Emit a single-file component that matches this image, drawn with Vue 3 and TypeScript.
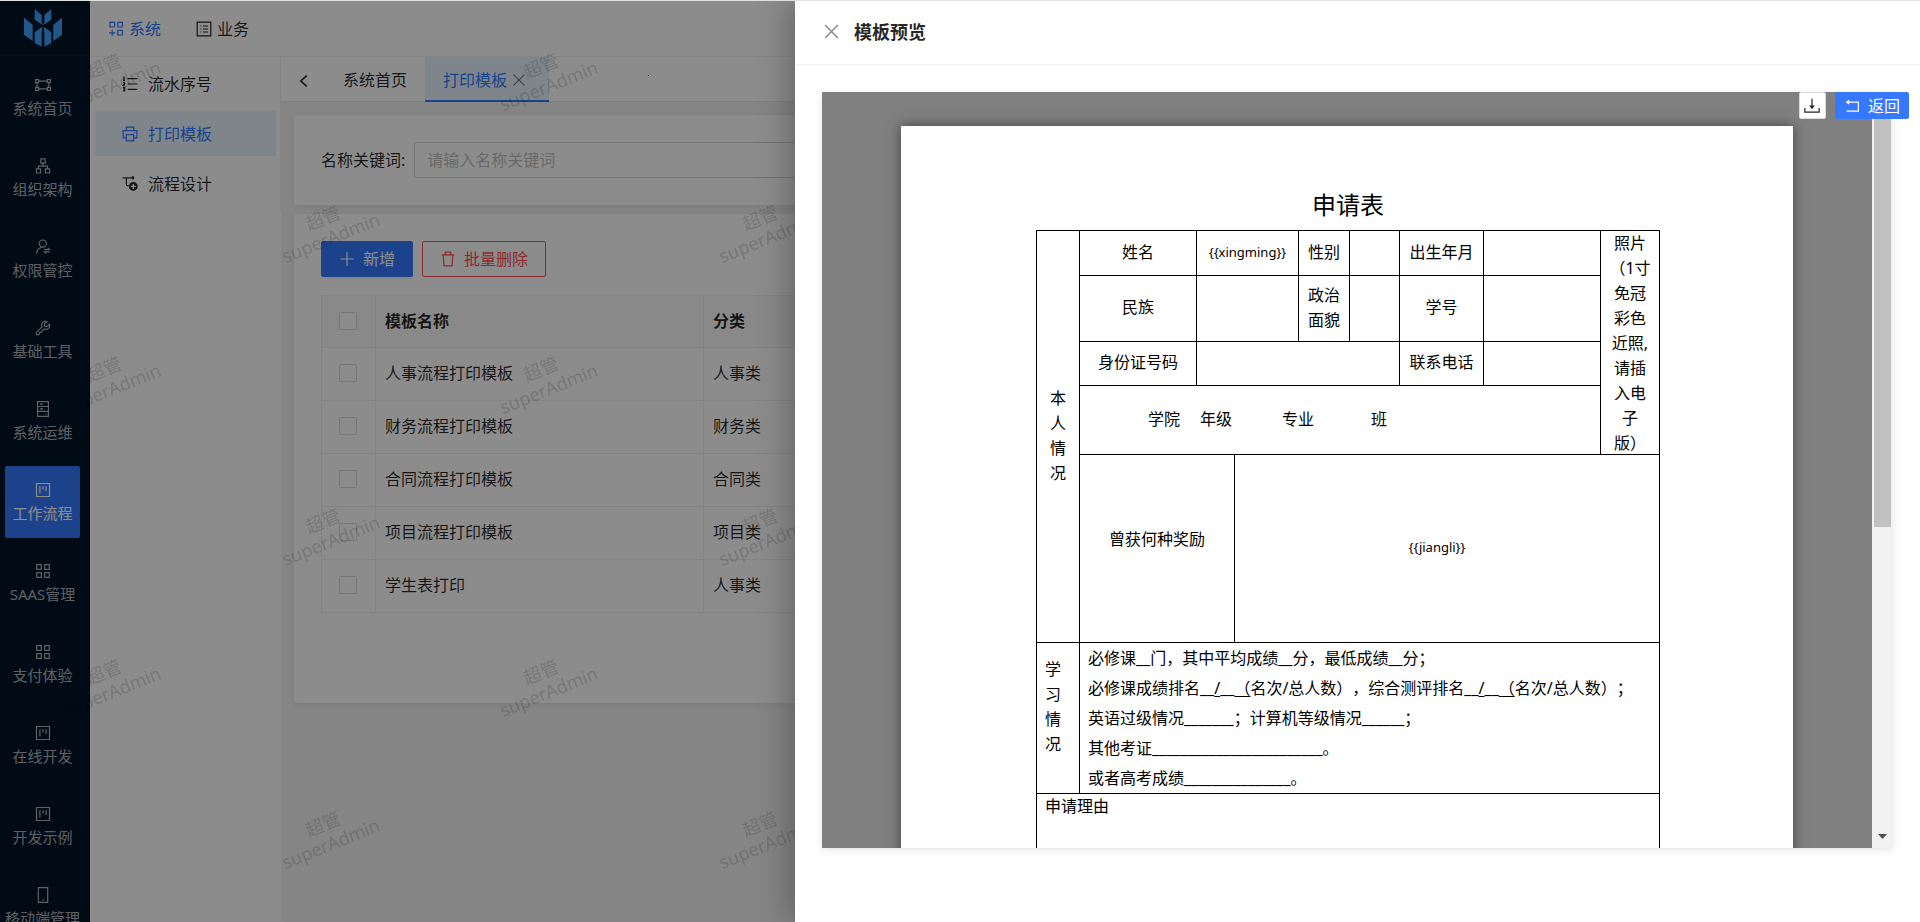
<script setup lang="ts">
import { ref } from 'vue'

interface Icon {
  line?: string
  fill?: string
}

const icons: Record<string, Icon> = {
  gateway: { line: 'M.6 2.6h3v3h-3zM12.4 2.6h3v3h-3zM.6 10.4h3v3h-3zM12.4 10.4h3v3h-3zM3.6 4.1h8.8M3.6 11.9h8.8M2.1 5.6v4.8M13.9 5.6v4.8' },
  apartment: { line: 'M5.8.8h4.4v4.4H5.8zM1.4 10.8h4.2V15H1.4zM10.4 10.8h4.2V15h-4.2zM8 5.2v3M3.5 10.8V8.2h9v2.6' },
  user: { line: 'M11.4 4.6a3.6 3.6 0 1 1-7.2 0 3.6 3.6 0 0 1 7.2 0zM1.6 14.8c.1-3.4 2-5.6 4.7-6.3M9.2 10.6h5.2l-1.6-1.6M14.6 12.8H9.4l1.6 1.6' },
  tool: { line: 'M14.4 4.1l-2.6 2.5-2.1-.4-.4-2.1L11.900 1.500C10 .8 7.900 1.500 7 3.300c-.6 1.200-.5 2.500 0 3.600L1.400 12.400v2.200h2.200l1-1v-1.200h1.200L9.100 9c1.200.5 2.600.5 3.800-.3 1.600-1 2.200-2.900 1.500-4.600z' },
  server: { line: 'M2.600.7h10.800v14.600H2.600zM2.600 5.500h10.800M2.600 10.300h10.800M5 3.100h3M5 7.900h3M10.500 12.800h1' },
  project: { line: 'M1.500 1.500h13v13h-13zM4.900 4.200v7.400M8 4.200v3.200M11.100 4.200v4.800' },
  appstore: { line: 'M1.700 1.700h4.600v4.600H1.700zM9.700 1.700h4.600v4.600H9.700zM1.700 9.700h4.600v4.600H1.700zM9.700 9.700h4.600v4.600H9.700z' },
  mobile: { line: 'M3.300.7h9.400v14.600H3.300zM7 13h2' },
  appadd: { line: 'M2 1.400h4.600V6H2zM9.800 1.400h4.600V6H9.800zM9.800 9.400h4.600V14H9.800zM4.200 8.800v6M1 11.800h6.200' },
  profile: { line: 'M1.200 1.200h13.600v13.600H1.200zM7 5h5M7 8h5M7 11h5M4.400 5h1M4.400 8h1M4.400 11h1' },
  ordered: { line: 'M5.600 2.600h9.800M5.600 8h9.800M5.600 13.400h9.800M1.200 1.200H2v3M1 4.300h2M1 6.700h1.600v1.200L1 9.300h1.800M1 11.700h1.700v3.100H1M1.400 13.200h1.200' },
  printer: { line: 'M4.300 4.600V1.200h7.400v3.400M4.200 11.800H1.100V4.700h13.800v7.100h-3.100M4.300 8.600h7.400v6.200H4.300zM11.800 6.700h1' },
  node: {
    line: 'M.6 1.800h11M4.400 1.800v6.800c0 .6.300 1 1 1h1.400',
    fill: 'M10 .2a1.700 1.700 0 1 1 0 3.200zM11.300 6a4.400 4.400 0 1 0 0 8.800 4.400 4.400 0 0 0 0-8.800zm.7 1.900v1.800h1.800v1.400H12v1.800h-1.400v-1.800H8.800V9.700h1.800V7.900z',
  },
  left: { line: 'M10.800 2.600L4.800 8l6 5.400' },
  close: { line: 'M2.600 2.600l10.800 10.800M13.400 2.600L2.600 13.400' },
  plus: { line: 'M8 1v14M1.400 8h13.200' },
  trash: { line: 'M1.600 3.800h12.800M5.200 3.800V1.200h5.600v2.600M3.200 3.800l.7 11h8.200l.7-11' },
  download: { line: 'M8 .8v9M.9 10v4.200h14.200V10', fill: 'M5.200 7.600h5.600L8 11.200z' },
  rollback: { line: 'M4.600 4.200h9.800v9H2.600', fill: 'M5.200 1.600v5.200L1.600 4.200z' },
}

const modules = [
  { label: '系统首页', icon: 'gateway' },
  { label: '组织架构', icon: 'apartment' },
  { label: '权限管控', icon: 'user' },
  { label: '基础工具', icon: 'tool' },
  { label: '系统运维', icon: 'server' },
  { label: '工作流程', icon: 'project' },
  { label: 'SAAS管理', icon: 'appstore' },
  { label: '支付体验', icon: 'appstore' },
  { label: '在线开发', icon: 'project' },
  { label: '开发示例', icon: 'project' },
  { label: '移动端管理', icon: 'mobile' },
]

const topMenu = [
  { label: '系统', icon: 'appadd' },
  { label: '业务', icon: 'profile' },
]

const subMenu = [
  { label: '流水序号', icon: 'ordered' },
  { label: '打印模板', icon: 'printer' },
  { label: '流程设计', icon: 'node' },
]

const templates = [
  { name: '人事流程打印模板', type: '人事类' },
  { name: '财务流程打印模板', type: '财务类' },
  { name: '合同流程打印模板', type: '合同类' },
  { name: '项目流程打印模板', type: '项目类' },
  { name: '学生表打印', type: '人事类' },
]

const activeModule = ref('工作流程')
const activeTop = ref('系统')
const activeSub = ref('打印模板')
const keyword = ref('')

const nameField = '{{xingming}}'
const awardField = '{{jiangli}}'
const columnWidths = [43, 117, 38, 64, 51, 50, 84, 117, 59]
</script>

<template>
  <div class="app">
    <div class="shell">
      <aside class="side">
        <div class="logo">
          <svg width="38" height="38" viewBox="0 0 114 114" aria-hidden="true">
            <path d="M0 26l26 21v49L0 78zM114 26L88 47v49l26-18zM32 0l21 18v22l4 9-25-17zM82 0L61 18v22l-4 9 25-17zM55 53L32 70v32l21 11V72zM59 53l23 17v32l-21 11V72z" />
          </svg>
        </div>
        <nav class="modules">
          <button
            v-for="m in modules"
            :key="m.label"
            type="button"
            class="module"
            :class="{ on: m.label === activeModule }"
            @click="activeModule = m.label"
          >
            <svg class="ico" viewBox="0 0 16 16"><path :d="icons[m.icon].line" /></svg>
            <span>{{ m.label }}</span>
          </button>
        </nav>
      </aside>

      <div class="right">
        <header class="top">
          <a
            v-for="t in topMenu"
            :key="t.label"
            href="#"
            class="topitem"
            :class="{ on: t.label === activeTop }"
            @click.prevent="activeTop = t.label"
          >
            <svg class="ico" viewBox="0 0 16 16"><path :d="icons[t.icon].line" /></svg>
            <span>{{ t.label }}</span>
          </a>
        </header>

        <div class="work">
          <nav class="sub">
            <div class="sublist">
              <a
                v-for="s in subMenu"
                :key="s.label"
                href="#"
                class="subitem"
                :class="{ on: s.label === activeSub }"
                @click.prevent="activeSub = s.label"
              >
                <svg class="ico" viewBox="0 0 16 16">
                  <path :d="icons[s.icon].line" />
                  <path v-if="icons[s.icon].fill" class="solid" :d="icons[s.icon].fill" />
                </svg>
                <span>{{ s.label }}</span>
              </a>
            </div>
          </nav>

          <main class="main">
            <div class="tabs">
              <button type="button" class="prev" aria-label="向左">
                <svg class="ico bold" viewBox="0 0 16 16"><path :d="icons.left.line" /></svg>
              </button>
              <a href="#" class="tab">系统首页</a>
              <a href="#" class="tab on">
                <span>打印模板</span>
                <svg class="ico x" viewBox="0 0 16 16"><path :d="icons.close.line" /></svg>
              </a>
              <i class="dot"></i>
            </div>

            <section class="card search">
              <label for="kw">名称关键词:</label>
              <input id="kw" v-model="keyword" type="text" placeholder="请输入名称关键词" />
            </section>

            <section class="card list">
              <div class="actions">
                <button type="button" class="btn primary">
                  <svg class="ico" viewBox="0 0 16 16"><path :d="icons.plus.line" /></svg>
                  <span>新增</span>
                </button>
                <button type="button" class="btn danger">
                  <svg class="ico" viewBox="0 0 16 16"><path :d="icons.trash.line" /></svg>
                  <span>批量删除</span>
                </button>
              </div>
              <table class="grid">
                <thead>
                  <tr>
                    <th class="pick"><input type="checkbox" aria-label="全选" /></th>
                    <th class="name">模板名称</th>
                    <th>分类</th>
                  </tr>
                </thead>
                <tbody>
                  <tr v-for="row in templates" :key="row.name">
                    <td class="pick"><input type="checkbox" :aria-label="row.name" /></td>
                    <td>{{ row.name }}</td>
                    <td>{{ row.type }}</td>
                  </tr>
                </tbody>
              </table>
            </section>
          </main>
        </div>
      </div>

      <svg class="watermark" width="100%" height="100%" aria-hidden="true">
        <defs>
          <pattern id="wm" width="437" height="303" patternUnits="userSpaceOnUse">
            <g transform="translate(327 227) rotate(-22)">
              <text y="-4">超管</text>
              <text y="17">superAdmin</text>
            </g>
            <g transform="translate(108 75) rotate(-22)">
              <text y="-4">超管</text>
              <text y="17">superAdmin</text>
            </g>
          </pattern>
        </defs>
        <rect width="100%" height="100%" fill="url(#wm)" />
      </svg>
      <div class="mask"></div>
    </div>

    <section class="drawer" role="dialog" aria-labelledby="dt">
      <header class="dhead">
        <button type="button" class="dclose" aria-label="关闭">
          <svg class="ico" viewBox="0 0 16 16"><path :d="icons.close.line" /></svg>
        </button>
        <h2 id="dt">模板预览</h2>
      </header>
      <div class="dbody">
        <div class="viewer">
          <div class="canvas">
            <article class="page">
              <h1>申请表</h1>
              <table class="form">
                <colgroup>
                  <col v-for="(w, i) in columnWidths" :key="i" :style="{ width: w + 'px' }" />
                </colgroup>
                <tbody>
                  <tr class="r1">
                    <td rowspan="5">本<br />人<br />情<br />况</td>
                    <td>姓名</td>
                    <td colspan="2" class="latin">{{ nameField }}</td>
                    <td>性别</td>
                    <td></td>
                    <td>出生年月</td>
                    <td></td>
                    <td rowspan="4" class="photo">
                      <div>照片<br />（1寸<br />免冠<br />彩色<br />近照,<br />请插<br />入电<br />子<br />版）</div>
                    </td>
                  </tr>
                  <tr class="r2">
                    <td>民族</td>
                    <td colspan="2"></td>
                    <td>政治<br />面貌</td>
                    <td></td>
                    <td>学号</td>
                    <td></td>
                  </tr>
                  <tr class="r3">
                    <td>身份证号码</td>
                    <td colspan="4"></td>
                    <td>联系电话</td>
                    <td></td>
                  </tr>
                  <tr class="r4">
                    <td colspan="7">
                      <div class="study">
                        <span class="college">学院</span><span class="grade">年级</span><span class="major">专业</span><span>班</span>
                      </div>
                    </td>
                  </tr>
                  <tr class="r5">
                    <td colspan="2" class="award">曾获何种奖励</td>
                    <td colspan="6" class="latin awardval">{{ awardField }}</td>
                  </tr>
                  <tr class="r6">
                    <td class="learn">学<br />习<br />情<br />况</td>
                    <td colspan="8" class="lines">
                      <p>必修课__门，其中平均成绩__分，最低成绩__分；</p>
                      <p>必修课成绩排名__<u>/</u>__<u>（</u>名次/总人数），综合测评排名__<u>/</u>__<u>（</u>名次/总人数）；</p>
                      <p>英语过级情况_______；计算机等级情况______；</p>
                      <p>其他考证________________________。</p>
                      <p>或者高考成绩_______________。</p>
                    </td>
                  </tr>
                  <tr class="r7">
                    <td colspan="9" class="reason">申请理由</td>
                  </tr>
                </tbody>
              </table>
            </article>
          </div>
          <div class="bar" aria-hidden="true">
            <div class="thumb"></div>
            <svg width="9" height="5" viewBox="0 0 9 5"><path d="M0 0h9L4.500 5z" /></svg>
          </div>
        </div>
        <div class="tools">
          <button type="button" class="dl" aria-label="下载">
            <svg class="ico" viewBox="0 0 16 16">
              <path :d="icons.download.line" />
              <path class="solid" :d="icons.download.fill" />
            </svg>
          </button>
          <button type="button" class="back">
            <svg class="ico" viewBox="0 0 16 16">
              <path :d="icons.rollback.line" />
              <path class="solid" :d="icons.rollback.fill" />
            </svg>
            <span>返回</span>
          </button>
        </div>
      </div>
    </section>
  </div>
</template>

<style>
body {
  margin: 0;
  overflow: hidden;
}
</style>

<style scoped>
.app {
  position: relative;
  height: 100vh;
  box-sizing: border-box;
  border-top: 1px solid #dfe3e2;
  overflow: hidden;
  font-family: 'Noto Sans', 'Noto Sans CJK SC', sans-serif;
  font-size: 16px;
  line-height: 24px;
  color: rgba(0, 0, 0, 0.85);
  text-spacing-trim: space-all;
}
.app *,
.app *::before {
  box-sizing: border-box;
}
a {
  color: inherit;
  text-decoration: none;
}
button,
input {
  font: inherit;
  margin: 0;
}
.ico {
  width: 16px;
  height: 16px;
  flex: none;
  fill: none;
  stroke: currentColor;
  stroke-width: 1.2;
}
.ico .solid {
  fill: currentColor;
  stroke: none;
}
.ico.bold {
  stroke-width: 1.6;
}
.shell {
  position: relative;
  display: flex;
  height: 100%;
}
.side {
  width: 90px;
  flex: none;
  background: #001529;
  overflow: hidden;
}
.logo {
  height: 55px;
  padding: 8px 0 0 24px;
  border-bottom: 1px solid #06203a;
}
.logo path {
  fill: #3ca0fa;
}
.modules {
  display: flex;
  flex-direction: column;
  gap: 9px;
  padding: 5px 10px 0 5px;
}
.module {
  flex: none;
  height: 72px;
  padding: 16px 0 0;
  border: 0;
  border-radius: 2px;
  background: none;
  color: rgba(255, 255, 255, 0.68);
  font-size: 15px;
  line-height: 22px;
  white-space: nowrap;
  display: flex;
  flex-direction: column;
  align-items: center;
  gap: 4px;
}
.module.on {
  background: #3479ff;
  color: #fff;
}
.right {
  flex: 1;
  min-width: 0;
  display: flex;
  flex-direction: column;
}
.top {
  display: flex;
  height: 56px;
  flex: none;
  background: #fff;
  border-bottom: 1px solid #f4f4f4;
}
.topitem {
  display: flex;
  align-items: center;
  gap: 5px;
  padding: 0 18px;
}
.topitem + .topitem {
  padding-left: 17px;
}
.on.topitem,
.on.subitem {
  color: #3479ff;
}
.work {
  flex: 1;
  min-height: 0;
  display: flex;
}
.sub {
  width: 191px;
  flex: none;
  background: #fff;
}
.sublist {
  display: flex;
  flex-direction: column;
  gap: 5px;
  padding: 4px 4px 4px 5px;
  border-right: 1px solid #f0f0f0;
}
.subitem {
  display: flex;
  align-items: center;
  gap: 10px;
  height: 45px;
  padding-left: 27px;
  border-radius: 2px;
}
.on.subitem,
.on.tab {
  background: #e6f4ff;
}
.main {
  flex: 1;
  min-width: 0;
  background: #f3f3f3;
}
.tabs {
  display: flex;
  height: 45px;
  background: #fff;
  border-bottom: 1px solid #e8e8e8;
  margin-bottom: 13px;
}
.prev {
  display: flex;
  align-items: center;
  width: 44px;
  padding: 4px 0 0 15px;
  border: 0;
  background: none;
  color: inherit;
}
.tab {
  display: flex;
  align-items: center;
  height: 45px;
  padding: 0 18px;
}
.on.tab {
  padding-right: 22px;
  gap: 4px;
  color: #3479ff;
  box-shadow: inset 0 -2px #3479ff;
}
.x {
  color: #767676;
}
.dot {
  width: 1px;
  height: 1px;
  margin: 18px 0 0 99px;
  background: #000;
}
.card {
  margin: 0 13px 9px;
  padding: 27px;
  background: #fff;
  border-radius: 3px;
  box-shadow: 0 2px 8px rgba(0, 0, 0, 0.08);
}
.search {
  display: flex;
  align-items: center;
  gap: 9px;
}
.search input {
  flex: 1;
  height: 36px;
  padding: 0 12px;
  border: 1px solid #d9d9d9;
  border-radius: 2px;
  background: none;
}
.search input::placeholder {
  color: #bfbfbf;
}
.list {
  padding-bottom: 90px;
}
.actions {
  display: flex;
  gap: 9px;
  margin-bottom: 18px;
}
.btn {
  display: flex;
  align-items: center;
  gap: 8px;
  height: 36px;
  padding: 0 17px;
  border: 1px solid;
  border-radius: 2px;
}
.primary {
  background: #3479ff;
  border-color: #3479ff;
  color: #fff;
  box-shadow: 0 2px 0 rgba(0, 0, 0, 0.04);
}
.danger {
  background: #fff;
  border-color: #ff4d4f;
  color: #ff4d4f;
}
.grid {
  width: 100%;
  table-layout: fixed;
  border-collapse: collapse;
}
.grid th,
.grid td {
  height: 53px;
  padding: 0 9px 2px;
  border: 1px solid #f0f0f0;
  text-align: left;
}
.grid th {
  height: 52px;
  background: #fafafa;
  font-weight: 700;
}
.grid .pick {
  width: 54px;
  padding: 0 2px 2px 0;
  text-align: center;
}
.grid .name {
  width: 328px;
}
.pick input {
  appearance: none;
  display: block;
  width: 18px;
  height: 18px;
  margin: 0 auto;
  border: 1px solid #d9d9d9;
  border-radius: 2px;
  background: #fff;
}
.watermark,
.mask {
  position: absolute;
  inset: 0;
  pointer-events: none;
}
.watermark text {
  font-size: 18px;
  text-anchor: middle;
  fill: rgba(0, 0, 0, 0.15);
}
.mask {
  background: rgba(0, 0, 0, 0.45);
}
.drawer {
  position: absolute;
  top: 0;
  right: 0;
  bottom: 0;
  left: 795px;
  display: flex;
  flex-direction: column;
  background: #fff;
  box-shadow: -6px 0 30px rgba(0, 0, 0, 0.28);
}
.dhead {
  display: flex;
  align-items: center;
  gap: 13px;
  height: 64px;
  flex: none;
  padding: 0 27px 2px;
  border-bottom: 1px solid #f0f0f0;
}
.dhead h2 {
  margin: 0;
  font-size: 18px;
  font-weight: 700;
}
.dclose {
  display: flex;
  padding: 0;
  border: 0;
  background: none;
  color: #868686;
}
.dclose .ico {
  width: 19px;
  height: 19px;
}
.dbody {
  position: relative;
  flex: 1;
  min-height: 0;
  padding: 27px 27px 74px;
}
.viewer {
  display: flex;
  height: 100%;
  box-shadow: 0 2px 8px rgba(0, 0, 0, 0.1);
}
.canvas {
  flex: 1;
  overflow: hidden;
  padding: 34px 24px;
  background: #808080;
}
.page {
  max-width: 892px;
  min-height: 1262px;
  margin: 0 auto;
  padding: 61px 0 61px 2px;
  background: #fff;
  box-shadow: 0 0 12px rgba(0, 0, 0, 0.5);
  color: #000;
}
.page h1 {
  margin: 0 0 7px;
  font-size: 24px;
  line-height: 36px;
  font-weight: 400;
  text-align: center;
}
.form {
  width: 624px;
  margin: 0 auto;
  table-layout: fixed;
  border-collapse: collapse;
  line-height: 25px;
}
.form td {
  padding: 0 0 2px;
  border: 1px solid #000;
  text-align: center;
}
.r1 {
  height: 45px;
}
.r2 {
  height: 66px;
}
.r3 {
  height: 44px;
}
.r4 {
  height: 69px;
}
.r5 {
  height: 188px;
}
.r6 {
  height: 151px;
}
.r7 {
  height: 320px;
}
.form .latin {
  font-size: 13px;
}
.form .photo {
  padding: 0;
  vertical-align: top;
}
.photo div {
  height: 220px;
}
.study {
  display: flex;
  padding-left: 68px;
}
.college {
  margin-right: 20px;
}
.grade {
  margin-right: 50px;
}
.major {
  margin-right: 57px;
}
.form .award {
  padding-bottom: 18px;
}
.form .awardval {
  padding-right: 20px;
}
.form .learn {
  padding: 14px 0 0 8px;
  text-align: left;
  vertical-align: top;
}
.form .lines {
  padding: 0 0 0 8px;
  text-align: left;
  vertical-align: top;
  line-height: 30px;
}
.lines p {
  margin: 0;
  height: 30px;
  white-space: nowrap;
}
.lines u {
  text-underline-offset: 2px;
}
.form .reason {
  padding-left: 8px;
  text-align: left;
  vertical-align: top;
}
.bar {
  width: 21px;
  flex: none;
  display: flex;
  flex-direction: column;
  align-items: center;
  justify-content: space-between;
  padding: 21px 0 9px;
  background: #f1f1f1;
}
.thumb {
  width: 17px;
  height: 57%;
  background: #c1c1c1;
}
.bar path {
  fill: #505050;
}
.tools {
  position: absolute;
  top: 27px;
  right: 11px;
  display: flex;
  gap: 9px;
}
.dl,
.back {
  display: flex;
  align-items: center;
  justify-content: center;
  height: 27px;
  padding: 0;
  border: 1px solid #d9d9d9;
  border-radius: 2px;
  background: #fff;
  color: #222;
}
.dl {
  width: 27px;
}
.back {
  gap: 8px;
  padding: 0 8px;
  border-color: #3479ff;
  background: #3479ff;
  color: #fff;
}
</style>
